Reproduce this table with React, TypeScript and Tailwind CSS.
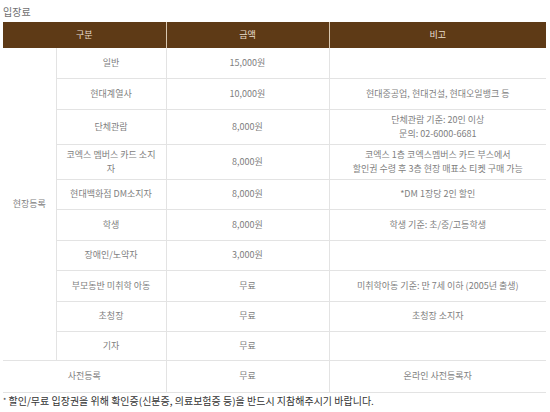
import React from 'react';

type Row = { name: string; price: string; note?: string[]; h: string };

const rows: Row[] = [
  { name: '일반', price: '15,000원', h: 'h-[30px]' },
  { name: '현대계열사', price: '10,000원', note: ['현대중공업, 현대건설, 현대오일뱅크 등'], h: 'h-[31px]' },
  { name: '단체관람', price: '8,000원', note: ['단체관람 기준: 20인 이상', '문의: 02-6000-6681'], h: 'h-[35px]' },
  {
    name: '코엑스 멤버스 카드 소지자',
    price: '8,000원',
    note: ['코엑스 1층 코엑스멤버스 카드 부스에서', '할인권 수령 후 3층 현장 매표소 티켓 구매 가능'],
    h: 'h-[35px]',
  },
  { name: '현대백화점 DM소지자', price: '8,000원', note: ['*DM 1장당 2인 할인'], h: 'h-[30px]' },
  { name: '학생', price: '8,000원', note: ['학생 기준: 초/중/고등학생'], h: 'h-[31px]' },
  { name: '장애인/노약자', price: '3,000원', h: 'h-[30px]' },
  { name: '부모동반 미취학 아동', price: '무료', note: ['미취학아동 기준: 만 7세 이하 (2005년 출생)'], h: 'h-[31px]' },
  { name: '초청장', price: '무료', note: ['초청장 소지자'], h: 'h-[30px]' },
  { name: '기자', price: '무료', h: 'h-[29px]' },
];

export default function App() {
  return (
    <div
      className="w-[550px] h-[412px] bg-white text-[9px] text-[#808080] overflow-hidden"
      style={{ fontFamily: '"Noto Sans CJK KR", "Noto Sans", sans-serif' }}
    >
      <div className="pl-[3px] pt-[6px] h-[22px] leading-[12px] text-[10px] text-[#707070]">입장료</div>
      <table className="ml-[3px] w-[543px] border-collapse table-fixed">
        <colgroup>
          <col className="w-[53px]" />
          <col className="w-[110px]" />
          <col className="w-[163px]" />
          <col className="w-[217px]" />
        </colgroup>
        <thead>
          <tr className="h-[26px] bg-[#5e3a16] text-[#eadfcf]">
            <th colSpan={2} className="font-normal border-r border-[#d9c7b0]">구분</th>
            <th className="font-normal border-r border-[#d9c7b0]">금액</th>
            <th className="font-normal">비고</th>
          </tr>
        </thead>
        <tbody className="leading-[14px]">
          {rows.map((row, i) => (
            <tr key={row.name} className={row.h}>
              {i === 0 && (
                <td rowSpan={rows.length} className="text-center border-b border-[#e3e3e3]">
                  현장등록
                </td>
              )}
              <td className="text-center px-[6px] border-l border-b border-[#e3e3e3]">{row.name}</td>
              <td className="text-center border-l border-b border-[#e3e3e3]">{row.price}</td>
              <td className="text-center border-l border-b border-[#e3e3e3]">
                {row.note?.map(line => (
                  <div key={line}>{line}</div>
                ))}
              </td>
            </tr>
          ))}
          <tr className="h-[32px]">
            <td colSpan={2} className="text-center border-b border-[#e3e3e3]">사전등록</td>
            <td className="text-center border-l border-b border-[#e3e3e3]">무료</td>
            <td className="text-center border-l border-b border-[#e3e3e3]">온라인 사전등록자</td>
          </tr>
        </tbody>
      </table>
      <div className="pl-[3px] pt-[1px] text-[10px] text-[#333] leading-[13px]">
        <span className="text-[7px] align-top">*</span> 할인/무료 입장권을 위해 확인증(신분증, 의료보험증 등)을 반드시 지참해주시기 바랍니다.
      </div>
    </div>
  );
}
